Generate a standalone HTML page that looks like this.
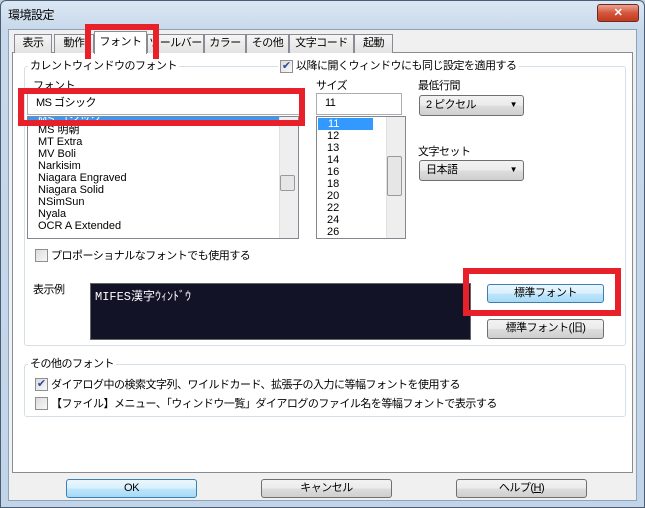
<!DOCTYPE html><html><head><meta charset="utf-8"><style>
*{box-sizing:border-box;margin:0;padding:0}
body{width:645px;height:508px;overflow:hidden;font-family:"Liberation Sans","Noto Sans CJK JP",sans-serif;font-size:11px;letter-spacing:-0.5px;color:#000;background:#bfd2e6;position:relative}
.a{position:absolute}
.frame{left:0;top:0;width:645px;height:508px;background:linear-gradient(#dbe7f4,#c7d8ea 30px,#c2d4e8);border:1px solid #4b5d74;border-radius:6px 6px 0 0}
.body{left:8px;top:29px;width:629px;height:472px;background:#f0f0f0;border:1px solid #8da2bb}
.tab{top:34px;height:19px;background:linear-gradient(#f6f6f6,#e2e2e2);border:1px solid #898c95;border-bottom:none;text-align:center;line-height:17px;white-space:nowrap;overflow:hidden}
.page{left:12px;top:52px;width:621px;height:421px;background:#fff;border:1px solid #898c95}
.grp{border:1px solid #d5dfe5;border-radius:3px}
.lbl{background:#fff;padding:0 2px;line-height:14px}
.tb{border:1px solid #abadb3;background:#fff;line-height:18px;padding-left:8px}
.sel{border:1px solid #707070;border-radius:3px;background:linear-gradient(#f2f2f2,#ebebeb 50%,#dddddd 51%,#cfcfcf);line-height:18px;padding-left:6px}
.sel:after{content:"▼";position:absolute;right:6px;top:0;font-size:8px}
.list{border:1px solid #828790;background:#fff;overflow:hidden}
.list div{height:12px;line-height:12px;font-size:11px;padding-left:10px;white-space:nowrap;letter-spacing:0}
.sb{background:#eeeeee;border-left:1px solid #e0e0e0}
.cb{width:13px;height:13px;border:1px solid #8f8f8f;background:linear-gradient(135deg,#dcdcdc,#f8f8f8);font-size:11px;line-height:11px;text-align:center;color:#2a4a9a;letter-spacing:0}
.btn{border:1px solid #707070;border-radius:3px;background:linear-gradient(#f2f2f2,#ebebeb 50%,#dddddd 51%,#cfcfcf);text-align:center;line-height:17px}
.red{border:6px solid #e8202a}
</style></head><body>
<div class="a frame"></div>
<div class="a" style="left:8px;top:6px;font-size:12px">環境設定</div>
<div class="a" style="left:597px;top:4px;width:42px;height:18px;border:1px solid #6d2a1f;border-radius:3px;background:linear-gradient(#e8a493,#d4553b 50%,#c2391e);color:#fff;text-align:center;font-weight:bold;line-height:16px">✕</div>
<div class="a body"></div>
<div class="a page"></div>
<div class="a tab" style="left:14px;width:38px">表示</div>
<div class="a tab" style="left:54px;width:40px">動作</div>
<div class="a tab" style="left:147px;width:57px">ツールバー</div>
<div class="a tab" style="left:204px;width:42px">カラー</div>
<div class="a tab" style="left:246px;width:43px">その他</div>
<div class="a tab" style="left:289px;width:65px">文字コード</div>
<div class="a tab" style="left:354px;width:39px">起動</div>
<div class="a tab" style="left:94px;top:31px;height:23px;width:53px;background:#fff;line-height:20px">フォント</div>
<div class="a red" style="left:85px;top:24px;width:74px;height:41px"></div>

<div class="a grp" style="left:24px;top:66px;width:602px;height:280px"></div>
<div class="a lbl" style="left:28px;top:59px">カレントウィンドウのフォント</div>
<div class="a lbl" style="left:278px;top:59px;display:flex;gap:3px;align-items:center"><div class="cb">✔</div>以降に開くウィンドウにも同じ設定を適用する</div>
<div class="a" style="left:33px;top:77px">フォント</div>
<div class="a" style="left:316px;top:77px">サイズ</div>
<div class="a" style="left:418px;top:77px">最低行間</div>
<div class="a tb" style="left:27px;top:93px;width:273px;height:22px">MS ゴシック</div>
<div class="a tb" style="left:316px;top:93px;width:86px;height:22px">11</div>
<div class="a sel" style="left:419px;top:95px;width:105px;height:21px">2 ピクセル</div>
<div class="a list" style="left:27px;top:116px;width:272px;height:123px">
<div style="background:#3399ff;color:#fff;height:7px;line-height:4px">MS ゴシック</div><div>MS 明朝</div><div>MT Extra</div><div>MV Boli</div><div>Narkisim</div><div>Niagara Engraved</div><div>Niagara Solid</div><div>NSimSun</div><div>Nyala</div><div>OCR A Extended</div></div>
<div class="a sb" style="left:279px;top:117px;width:19px;height:121px"></div>
<div class="a" style="left:280px;top:175px;width:15px;height:16px;border:1px solid #999;border-radius:2px;background:#e6e6e6"></div>
<div class="a list" style="left:316px;top:116px;width:90px;height:123px;padding-top:1px">
<div style="background:#3399ff;color:#fff;width:55px;margin-left:1px">11</div><div>12</div><div>13</div><div>14</div><div>16</div><div>18</div><div>20</div><div>22</div><div>24</div><div>26</div></div>
<div class="a sb" style="left:386px;top:117px;width:19px;height:121px"></div>
<div class="a" style="left:387px;top:156px;width:15px;height:40px;border:1px solid #999;border-radius:2px;background:#e6e6e6"></div>
<div class="a" style="left:418px;top:143px">文字セット</div>
<div class="a sel" style="left:419px;top:160px;width:105px;height:21px">日本語</div>
<div class="a" style="left:35px;top:247px;display:flex;gap:3px;align-items:center"><div class="cb"></div>プロポーショナルなフォントでも使用する</div>
<div class="a" style="left:33px;top:281px">表示例</div>
<div class="a" style="left:90px;top:283px;width:381px;height:57px;background:#131327;border:1px solid #666;color:#fff;font-family:'Liberation Mono','Noto Sans CJK JP',monospace;font-size:12px;padding:3px 0 0 4px;letter-spacing:0">MIFES漢字ｳｨﾝﾄﾞｳ</div>
<div class="a btn" style="left:487px;top:284px;width:117px;height:19px;border-color:#3c7fb1;background:linear-gradient(#eaf6fd,#d9f0fc 50%,#bee6fd 51%,#a7d9f5)">標準フォント</div>
<div class="a red" style="left:463px;top:268px;width:158px;height:48px"></div>
<div class="a btn" style="left:487px;top:319px;width:117px;height:20px">標準フォント(旧)</div>

<div class="a grp" style="left:24px;top:364px;width:602px;height:53px"></div>
<div class="a lbl" style="left:28px;top:357px">その他のフォント</div>
<div class="a" style="left:35px;top:376px;display:flex;gap:3px;align-items:center"><div class="cb">✔</div>ダイアログ中の検索文字列、ワイルドカード、拡張子の入力に等幅フォントを使用する</div>
<div class="a" style="left:35px;top:395px;display:flex;gap:3px;align-items:center"><div class="cb"></div>【ファイル】メニュー、「ウィンドウ一覧」ダイアログのファイル名を等幅フォントで表示する</div>
<div class="a red" style="left:18px;top:88px;width:287px;height:38px"></div>

<div class="a btn" style="left:66px;top:479px;width:131px;height:19px;border-color:#3c7fb1;background:linear-gradient(#eaf6fd,#d9f0fc 50%,#bee6fd 51%,#a7d9f5)">OK</div>
<div class="a btn" style="left:261px;top:479px;width:131px;height:19px">キャンセル</div>
<div class="a btn" style="left:456px;top:479px;width:131px;height:19px">ヘルプ(<u>H</u>)</div>
</body></html>
